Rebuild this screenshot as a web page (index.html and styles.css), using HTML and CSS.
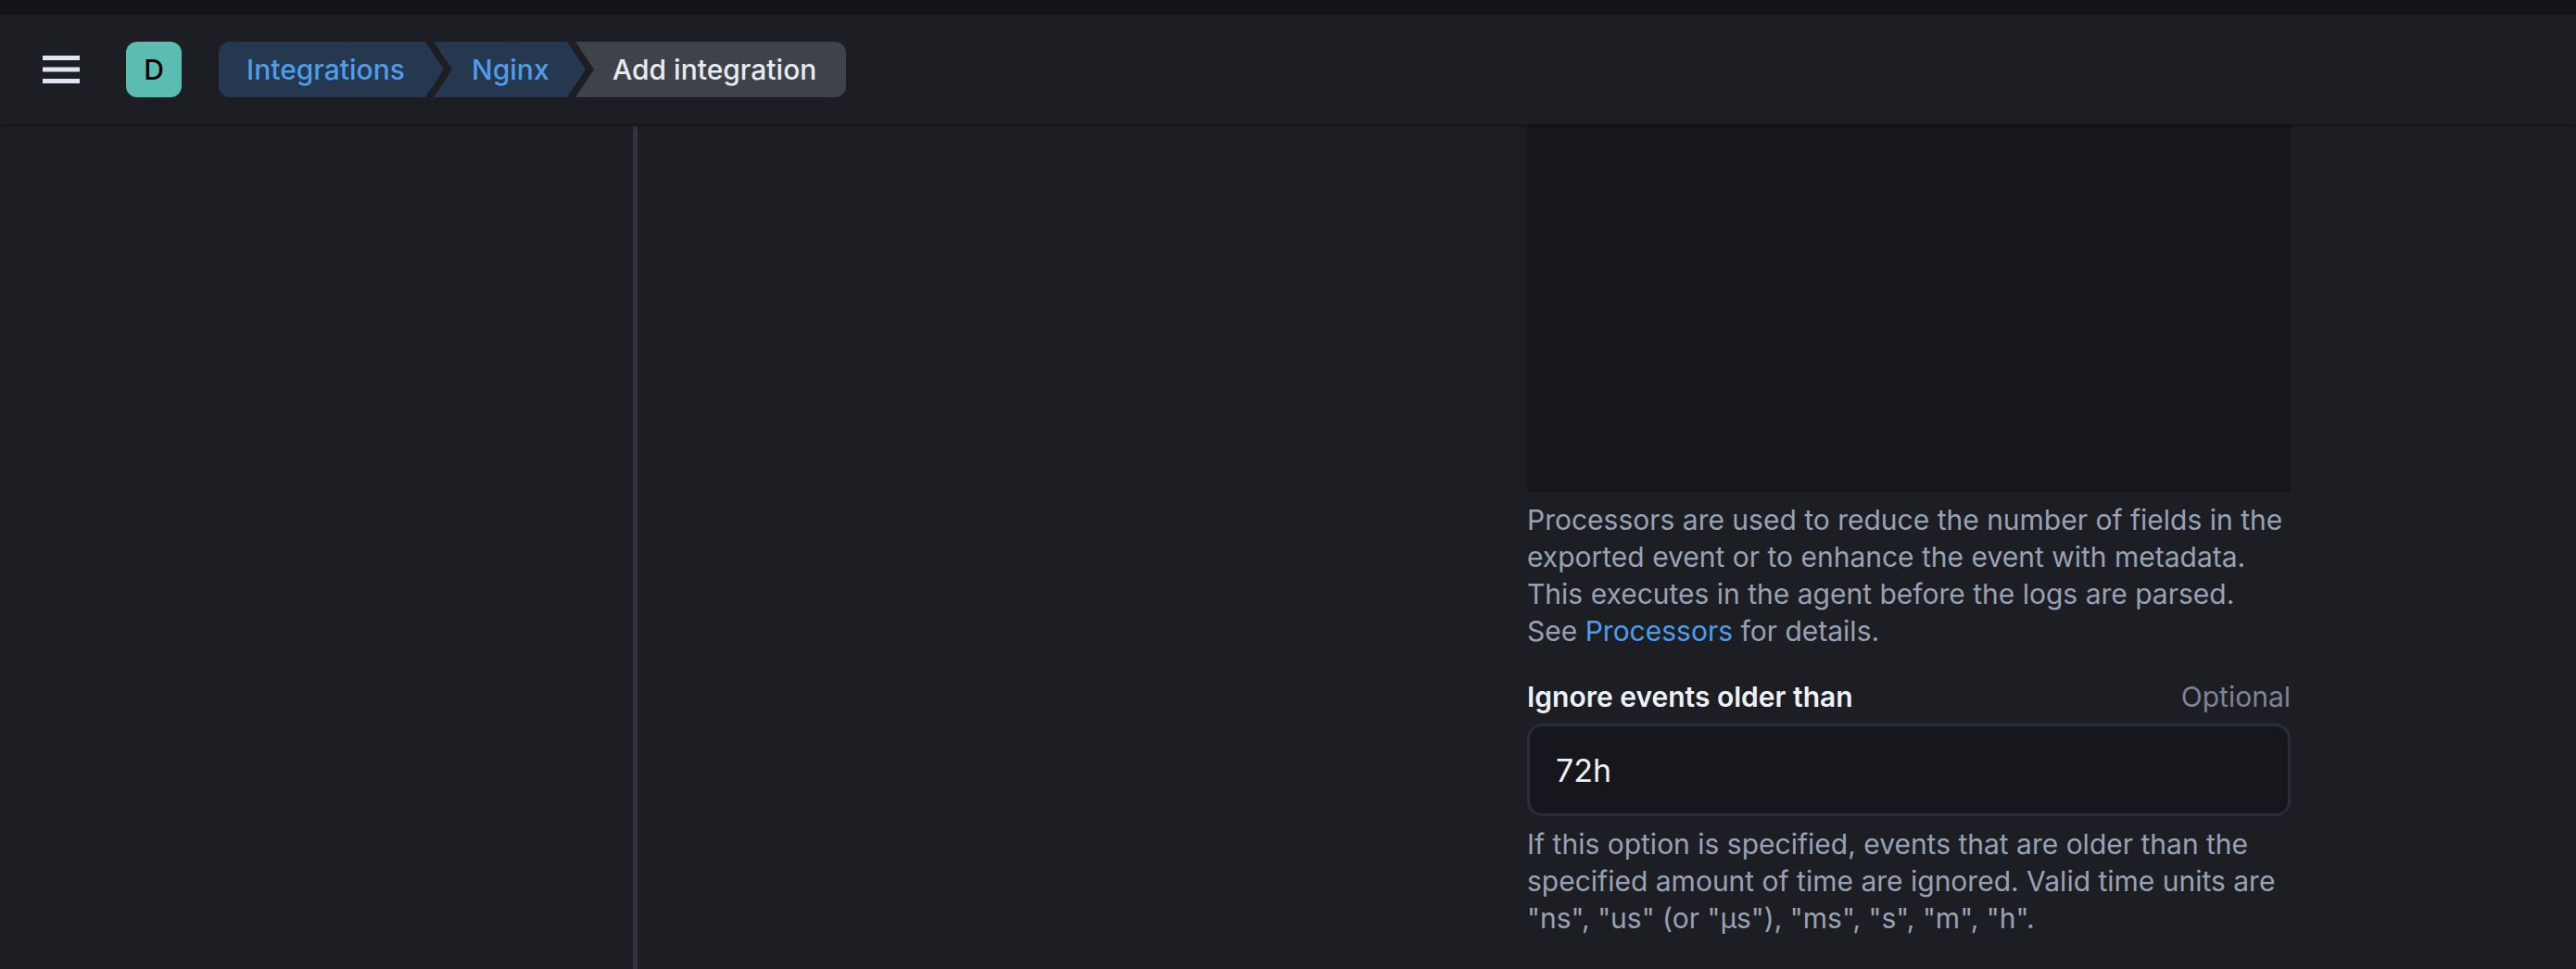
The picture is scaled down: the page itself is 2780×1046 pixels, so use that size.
FILE: index.html
```html
<!DOCTYPE html>
<html lang="en">
<head>
    <meta charset="UTF-8">
    <title>Add integration - Nginx</title>
    <link rel="stylesheet" href="styles.css">
</head>
<body>

<div class="top-strip"></div>

<div class="header">
    <button class="menu-button" aria-label="Menu">
        <svg width="40" height="30" viewBox="0 0 40 30"><path d="M0 0h40v5H0zM0 12.500h40v5H0zM0 25h40v5H0z" fill="#dfe5ef"/></svg>
    </button>
    <div class="space-badge">D</div>
    <div class="breadcrumbs">
        <a href="#integrations" class="crumb crumb-first">Integrations</a>
        <a href="#nginx" class="crumb crumb-middle">Nginx</a>
        <span class="crumb crumb-last">Add integration</span>
    </div>
</div>

<div class="main-content">
    <div class="side-column"></div>
    <div class="form-column">
        <div class="code-block"></div>
        <p class="help-text">Processors are used to reduce the number of fields in the exported event or to enhance the event with metadata. This executes in the agent before the logs are parsed. See <a href="#processors">Processors</a> for details.</p>
        <div class="field-label">
            <label for="ignoreOlder">Ignore events older than</label>
            <span class="optional">Optional</span>
        </div>
        <input type="text" id="ignoreOlder" class="text-input" value="72h">
        <p class="help-text">If this option is specified, events that are older than the specified amount of time are ignored. Valid time units are "ns", "us" (or "µs"), "ms", "s", "m", "h".</p>
    </div>
</div>

</body>
</html>
```

FILE: styles.css
```css
html, body {
    height: 100%;
}
body {
    font-family: Inter, "Liberation Sans", sans-serif;
    margin: 0;
    background-color: #1d1e24;
    color: #dfe5ef;
    display: flex;
    flex-direction: column;
    overflow: hidden;
}
.top-strip {
    height: 16px;
    background-color: #131419;
    flex: none;
}
.header {
    height: 118px;
    flex: none;
    display: flex;
    align-items: center;
    padding-left: 46px;
    background-color: #1d1e24;
    box-shadow: 0 2px 4px rgba(0,0,0,0.35);
    position: relative;
    box-sizing: border-box;
}
.menu-button {
    background: none;
    border: none;
    padding: 0;
    width: 40px;
    height: 30px;
    display: block;
}
.menu-button svg {
    display: block;
}
.space-badge {
    width: 60px;
    height: 60px;
    margin-left: 50px;
    border-radius: 12px;
    background-color: #5bbcb1;
    color: #000;
    font-size: 30px;
    font-weight: 500;
    display: flex;
    align-items: center;
    justify-content: center;
}
.breadcrumbs {
    display: flex;
    margin-left: 40px;
}
.crumb {
    height: 60px;
    line-height: 60px;
    font-size: 30px;
    font-weight: 500;
    text-decoration: none;
    box-sizing: border-box;
}
.crumb-first {
    width: 243px;
    padding-left: 30px;
    background-color: #25384f;
    color: #4f9de8;
    border-radius: 12px 0 0 12px;
    clip-path: polygon(0 0, 223px 0, 100% 50%, 223px 100%, 0 100%);
}
.crumb-middle {
    width: 164px;
    margin-left: -11px;
    padding-left: 41px;
    background-color: #25384f;
    color: #4f9de8;
    clip-path: polygon(0 0, 144px 0, 100% 50%, 144px 100%, 0 100%, 20px 50%);
}
.crumb-last {
    width: 292px;
    margin-left: -11px;
    padding-left: 40px;
    background-color: #404249;
    color: #e6ebf2;
    border-radius: 0 12px 12px 0;
    clip-path: polygon(0 0, 100% 0, 100% 100%, 0 100%, 20px 50%);
}
.main-content {
    flex: 1;
    display: flex;
    min-height: 0;
}
.side-column {
    width: 683px;
    flex: none;
    margin-top: 2px;
    border-right: 5px solid #33353c;
}
.form-column {
    width: 824px;
    margin-left: 960px;
    flex: none;
}
.code-block {
    height: 397px;
    background-color: #16171c;
}
.help-text {
    margin: 10px 0 0;
    font-size: 30px;
    line-height: 40px;
    color: #98a2b3;
}
.help-text a {
    color: #4f9de8;
    text-decoration: none;
}
.field-label {
    display: flex;
    justify-content: space-between;
    align-items: baseline;
    margin-top: 31px;
    font-size: 30px;
    line-height: 40px;
}
.field-label label {
    font-weight: 600;
    color: #eef1f7;
}
.optional {
    color: #7e8494;
}
.text-input {
    display: block;
    width: 100%;
    height: 100px;
    margin-top: 9px;
    padding: 0 28px;
    box-sizing: border-box;
    background-color: #16171c;
    border: 3px solid #2b2d34;
    border-radius: 16px;
    color: #eef1f7;
    font-family: inherit;
    font-size: 34px;
}
```
